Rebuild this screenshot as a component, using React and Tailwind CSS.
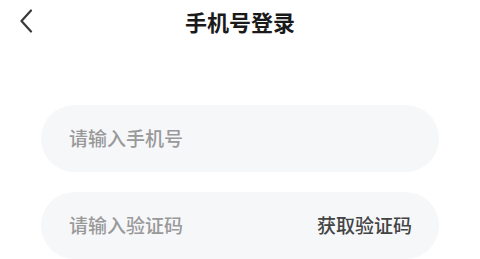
import { useState } from "react"

export default function App(){

const [phone,setPhone] = useState("")
const [code,setCode] = useState("")

return(

<div className="w-[480px] h-[259px] bg-white overflow-hidden" style={{fontFamily:'"Noto Sans CJK SC", "Noto Sans", sans-serif'}}>

{/* HEADER */}

<div className="relative h-[42px] flex items-center justify-center">

<button className="absolute left-[17px] top-[8px] w-[18px] h-[26px] flex items-center justify-center">
<svg width="14" height="24" viewBox="0 0 14 24" fill="none">
<path d="M12 1.5 L2.5 12 L12 22.5" stroke="#3a3a3a" strokeWidth="2.2" strokeLinecap="round" strokeLinejoin="round"/>
</svg>
</button>

<h1 className="text-[22px] font-bold text-[#1a1a1a] leading-none">
手机号登录
</h1>

</div>


{/* FORM */}

<div className="px-[41px] pt-[63px] flex flex-col gap-[20px]">

<div className="h-[67px] rounded-full bg-[#f6f7f9] flex items-center px-[28px]">
<input
value={phone}
onChange={(e)=>setPhone(e.target.value)}
placeholder="请输入手机号"
className="w-full bg-transparent outline-none text-[19px] font-medium text-[#333] placeholder:text-[#999]"
/>
</div>

<div className="h-[67px] rounded-full bg-[#f6f7f9] flex items-center pl-[28px] pr-[27px]">
<input
value={code}
onChange={(e)=>setCode(e.target.value)}
placeholder="请输入验证码"
className="flex-1 min-w-0 bg-transparent outline-none text-[19px] font-medium text-[#333] placeholder:text-[#999]"
/>
<button className="text-[19px] font-medium text-[#444] whitespace-nowrap">
获取验证码
</button>
</div>

</div>

</div>

)

}
